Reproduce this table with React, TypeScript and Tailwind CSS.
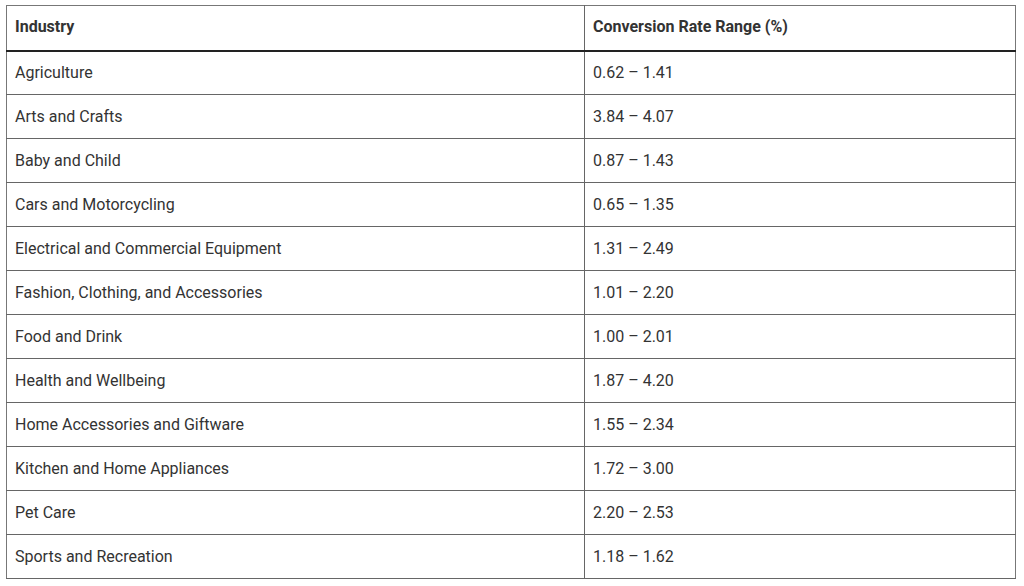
const rows: [string, string][] = [
  ['Agriculture', '0.62 – 1.41'],
  ['Arts and Crafts', '3.84 – 4.07'],
  ['Baby and Child', '0.87 – 1.43'],
  ['Cars and Motorcycling', '0.65 – 1.35'],
  ['Electrical and Commercial Equipment', '1.31 – 2.49'],
  ['Fashion, Clothing, and Accessories', '1.01 – 2.20'],
  ['Food and Drink', '1.00 – 2.01'],
  ['Health and Wellbeing', '1.87 – 4.20'],
  ['Home Accessories and Giftware', '1.55 – 2.34'],
  ['Kitchen and Home Appliances', '1.72 – 3.00'],
  ['Pet Care', '2.20 – 2.53'],
  ['Sports and Recreation', '1.18 – 1.62'],
]

export default function App() {
  return (
    <div className="w-[1024px] h-[586px] bg-white pt-[5px] pl-[6px] font-['Roboto',sans-serif] text-[#333]">
      <table className="w-[1010px] border-collapse border border-[#777] text-[16px]">
        <thead>
          <tr className="h-[45px] border-b-2 border-[#222]">
            <th className="w-[578px] border-r border-[#666] px-2 pb-px text-left font-bold">Industry</th>
            <th className="px-2 pb-px text-left font-bold">Conversion Rate Range (%)</th>
          </tr>
        </thead>
        <tbody>
          {rows.map(([name, range]) => (
            <tr key={name} className="h-[44px] border-b border-[#666]">
              <td className="border-r border-[#666] px-2">{name}</td>
              <td className="px-2">{range}</td>
            </tr>
          ))}
        </tbody>
      </table>
    </div>
  )
}
